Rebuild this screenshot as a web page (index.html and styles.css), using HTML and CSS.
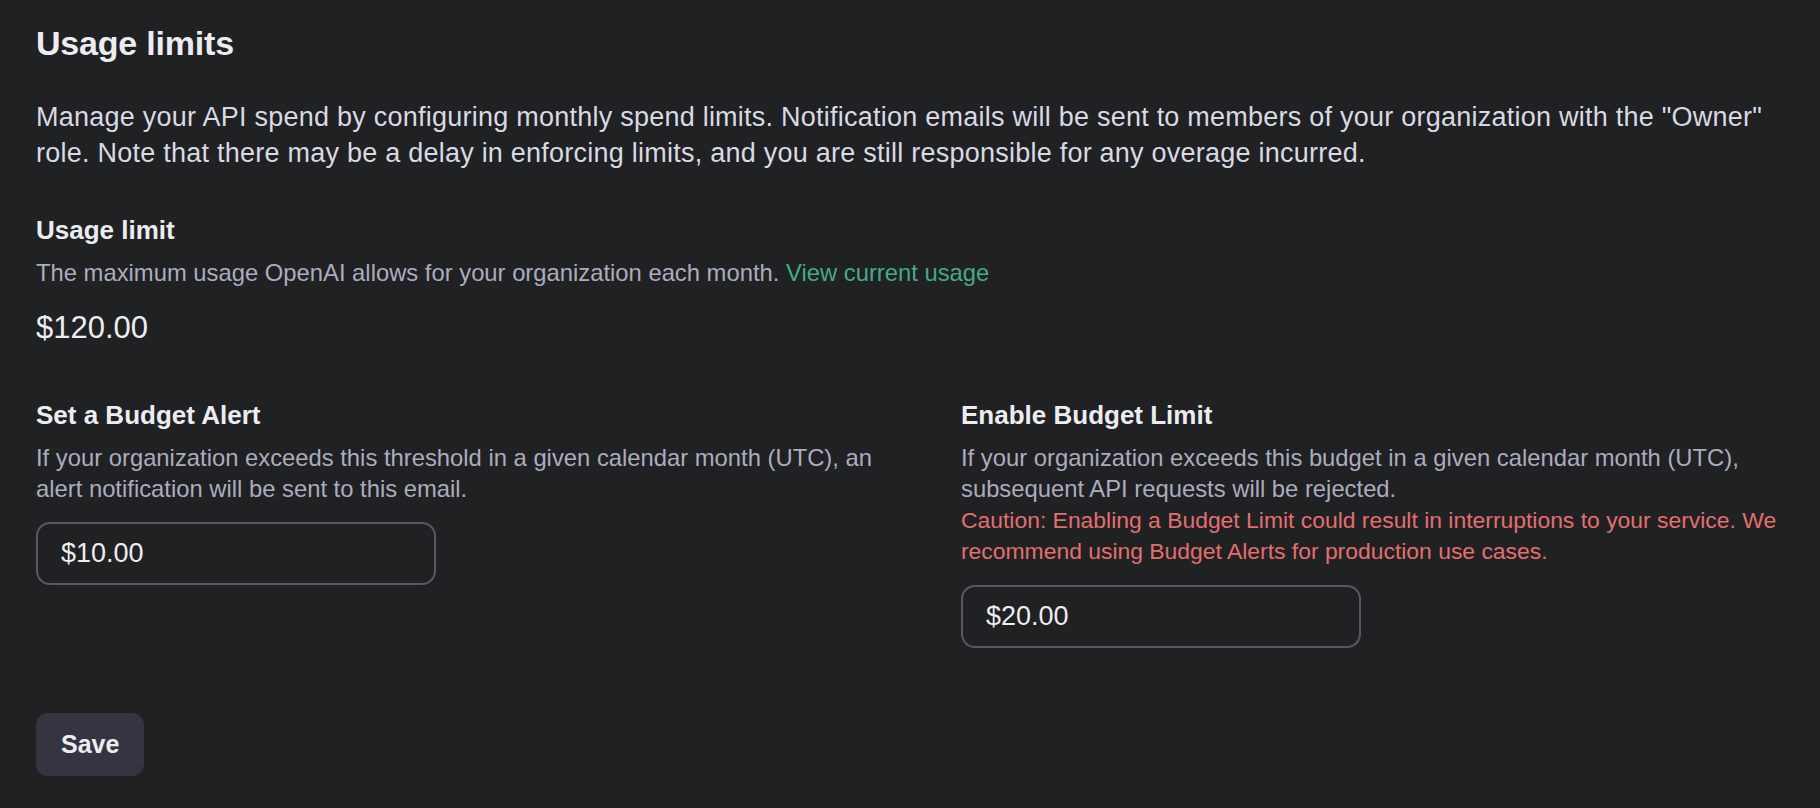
FILE: index.html
```html
<!DOCTYPE html>
<html lang="en">
<head>
<meta charset="utf-8">
<title>Usage limits</title>
<link rel="stylesheet" href="styles.css">
</head>
<body>
<main class="page">
  <h1 class="title">Usage limits</h1>
  <p class="intro">Manage your API spend by configuring monthly spend limits. Notification emails will be sent to members of your organization with the "Owner" role. Note that there may be a delay in enforcing limits, and you are still responsible for any overage incurred.</p>

  <section class="block">
    <h2 class="label">Usage limit</h2>
    <p class="desc">The maximum usage OpenAI allows for your organization each month. <a class="link" href="#">View current usage</a></p>
    <div class="amount">$120.00</div>
  </section>

  <div class="budget-grid">
    <section class="field">
      <h2 class="label">Set a Budget Alert</h2>
      <p class="desc">If your organization exceeds this threshold in a given calendar month (UTC), an alert notification will be sent to this email.</p>
      <input class="money-input" type="text" value="$10.00">
    </section>
    <section class="field">
      <h2 class="label">Enable Budget Limit</h2>
      <div class="desc">
        <p class="desc-line">If your organization exceeds this budget in a given calendar month (UTC), subsequent API requests will be rejected.</p>
        <p class="caution">Caution: Enabling a Budget Limit could result in interruptions to your service. We recommend using Budget Alerts for production use cases.</p>
      </div>
      <input class="money-input" type="text" value="$20.00">
    </section>
  </div>

  <button class="save-btn" type="button">Save</button>
</main>
</body>
</html>
```

FILE: styles.css
```css
html, body {
  margin: 0;
  padding: 0;
  background: #202123;
}

body {
  font-family: "Liberation Sans", Arial, sans-serif;
  color: #ececf1;
  width: 1820px;
  height: 808px;
  overflow: hidden;
}

.page {
  padding: 23px 14px 0 36px;
  display: flex;
  flex-direction: column;
  align-items: flex-start;
}

.title {
  margin: 0;
  font-size: 34px;
  line-height: 40px;
  font-weight: 700;
  color: #ececf1;
  letter-spacing: -0.2px;
}

.intro {
  margin: 37px 0 0;
  font-size: 27px;
  line-height: 35.5px;
  letter-spacing: 0.24px;
  color: #d9d9e3;
}

.block {
  margin-top: 43px;
  display: flex;
  flex-direction: column;
}

.label {
  margin: 0;
  font-size: 26px;
  line-height: 32px;
  font-weight: 700;
  color: #ececf1;
}

.desc {
  margin: 11px 0 0;
  font-size: 23.8px;
  line-height: 31.5px;
  color: #acacbe;
}

.desc-line {
  margin: 0;
}

.link {
  color: #46a986;
  text-decoration: none;
}

.caution {
  margin: 0;
  font-size: 22.9px;
  line-height: 31.5px;
  color: #e46e6e;
}

.amount {
  margin-top: 21px;
  font-size: 31px;
  line-height: 36px;
  color: #ececf1;
}

.budget-grid {
  align-self: stretch;
  margin-top: 53px;
  display: grid;
  grid-template-columns: 1fr 1fr;
  column-gap: 80px;
  align-items: start;
}

.field {
  display: flex;
  flex-direction: column;
  align-items: flex-start;
}

.money-input {
  margin-top: 17px;
  box-sizing: border-box;
  width: 400px;
  height: 63px;
  padding: 0 23px;
  border: 2px solid #565869;
  border-radius: 14px;
  background: #202123;
  color: #ececf1;
  font-family: "Liberation Sans", Arial, sans-serif;
  font-size: 27px;
  outline: none;
}

.save-btn {
  margin-top: 65px;
  height: 63px;
  padding: 0 25px;
  border: none;
  border-radius: 12px;
  background: #343541;
  color: #ececf1;
  font-family: "Liberation Sans", Arial, sans-serif;
  font-size: 25px;
  font-weight: 700;
  cursor: pointer;
}
```
